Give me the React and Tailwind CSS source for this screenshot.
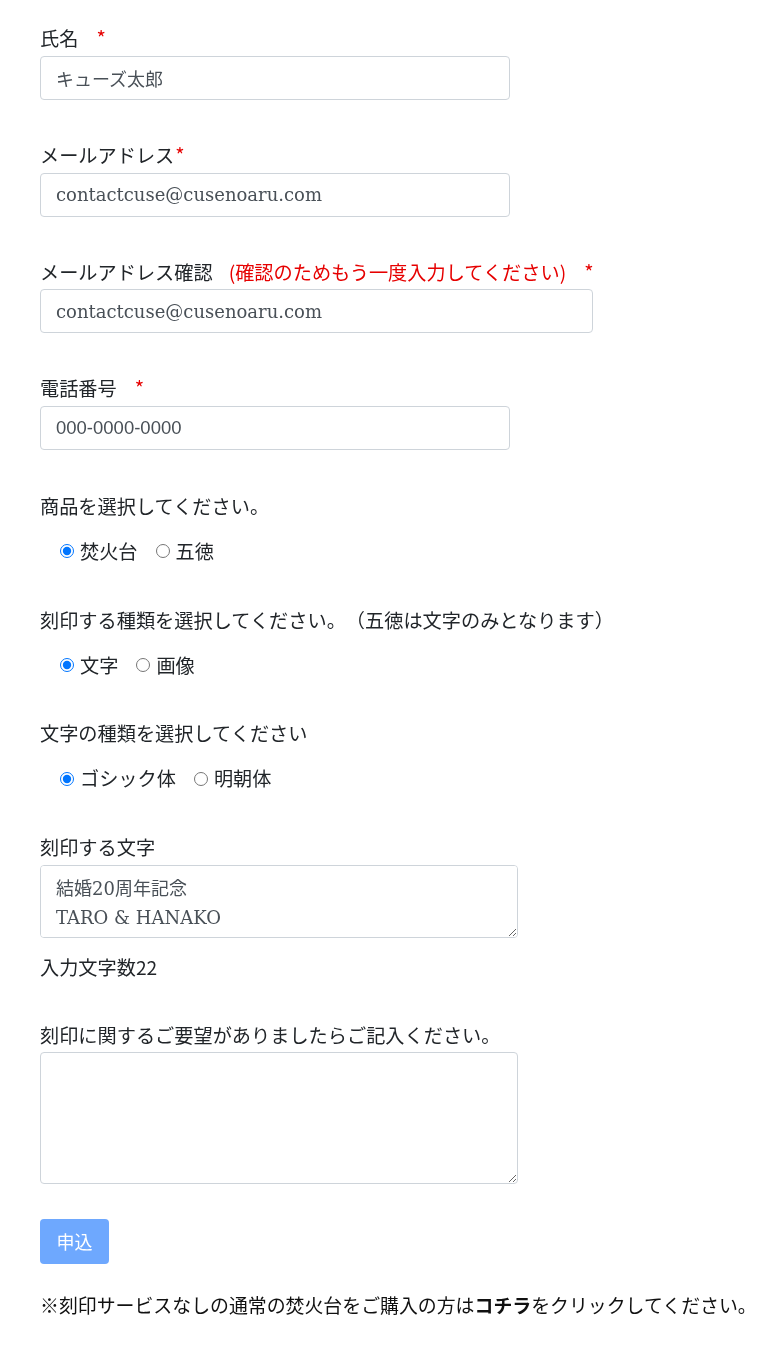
import React from "react";

const jp = "font-['Noto_Sans_CJK_JP',sans-serif] [text-spacing-trim:space-all]";
const field = "font-['DejaVu_Serif','Noto_Sans_CJK_JP',serif]";

const Req = ({ className = "" }) => (
  <span className={`text-[#e60000] text-[20px] ${className}`}>*</span>
);

const Label = ({ children, className = "" }) => (
  <div className={`text-[19.2px] leading-[28.8px] text-[#212529] ${className}`}>{children}</div>
);

const TextInput = ({ value, width, font = field, size = "text-[18px]" }) => (
  <input
    type="text"
    readOnly
    value={value}
    className={`block ${width} h-[44px] rounded-[4px] border border-[#ced4da] bg-white px-[15px] ${size} text-[#495057] outline-none ${font}`}
  />
);

const Radio = ({ name, label, checked }) => (
  <label className="flex items-center">
    <input
      type="radio"
      name={name}
      defaultChecked={checked}
      className="m-0 h-[14px] w-[14px]"
    />
    <span className="ml-[6px] text-[19.2px] leading-[28.8px] text-[#212529]">{label}</span>
  </label>
);

const RadioRow = ({ name, items, mt }) => (
  <div className={`${mt} flex items-center gap-[18px] pl-[20px]`}>
    {items.map((it, i) => (
      <Radio key={it} name={name} label={it} checked={i === 0} />
    ))}
  </div>
);

export default function App() {
  return (
    <div className={`min-h-screen bg-white pl-10 pt-[24px] pb-10 ${jp}`}>
      <Label className="mb-[3px]">
        氏名<Req className="ml-[18px]" />
      </Label>
      <TextInput value="キューズ太郎" width="w-[470px]" />

      <Label className="mt-[41px] mb-[3px]">
        メールアドレス<Req className="ml-[1px]" />
      </Label>
      <TextInput value="contactcuse@cusenoaru.com" width="w-[470px]" />

      <Label className="mt-[41px] mb-[3px]">
        メールアドレス確認
        <span className="ml-[16px] text-[#e60000]">(確認のためもう一度入力してください)</span>
        <Req className="ml-[18px]" />
      </Label>
      <TextInput value="contactcuse@cusenoaru.com" width="w-[553px]" />

      <Label className="mt-[41px] mb-[3px]">
        電話番号<Req className="ml-[18px]" />
      </Label>
      <TextInput
        value="000-0000-0000"
        width="w-[470px]"
        font="font-['Liberation_Sans',sans-serif]"
        size="text-[18.5px]"
      />

      <Label className="mt-[42px]">商品を選択してください。</Label>
      <RadioRow name="product" items={["焚火台", "五徳"]} mt="mt-[16px]" />

      <Label className="mt-[40px]">
        刻印する種類を選択してください。（五徳は文字のみとなります）
      </Label>
      <RadioRow name="kind" items={["文字", "画像"]} mt="mt-[16px]" />

      <Label className="mt-[40px]">文字の種類を選択してください</Label>
      <RadioRow name="font" items={["ゴシック体", "明朝体"]} mt="mt-[16px]" />

      <Label className="mt-[40px] mb-[3px]">刻印する文字</Label>
      <textarea
        readOnly
        value={"結婚20周年記念\nTARO & HANAKO"}
        className={`block h-[73px] w-[478px] rounded-[4px] border border-[#ced4da] bg-white px-[15px] py-[8px] text-[18px] leading-[29px] text-[#495057] outline-none ${field}`}
      />
      <Label className="mt-[15px]">入力文字数22</Label>

      <Label className="mt-[39px] mb-[3px]">
        刻印に関するご要望がありましたらご記入ください。
      </Label>
      <textarea
        readOnly
        className="block h-[132px] w-[478px] rounded-[4px] border border-[#ced4da] bg-white outline-none"
      />

      <button className="mt-[35px] h-[45px] w-[69px] rounded-[4px] bg-[#6ea8fe] text-[18px] text-white">
        申込
      </button>

      <div className="mt-[27px] text-[18.9px] leading-[28.8px] text-[#111]">
        ※刻印サービスなしの通常の焚火台をご購入の方は<b>コチラ</b>をクリックしてください。
      </div>
    </div>
  );
}
